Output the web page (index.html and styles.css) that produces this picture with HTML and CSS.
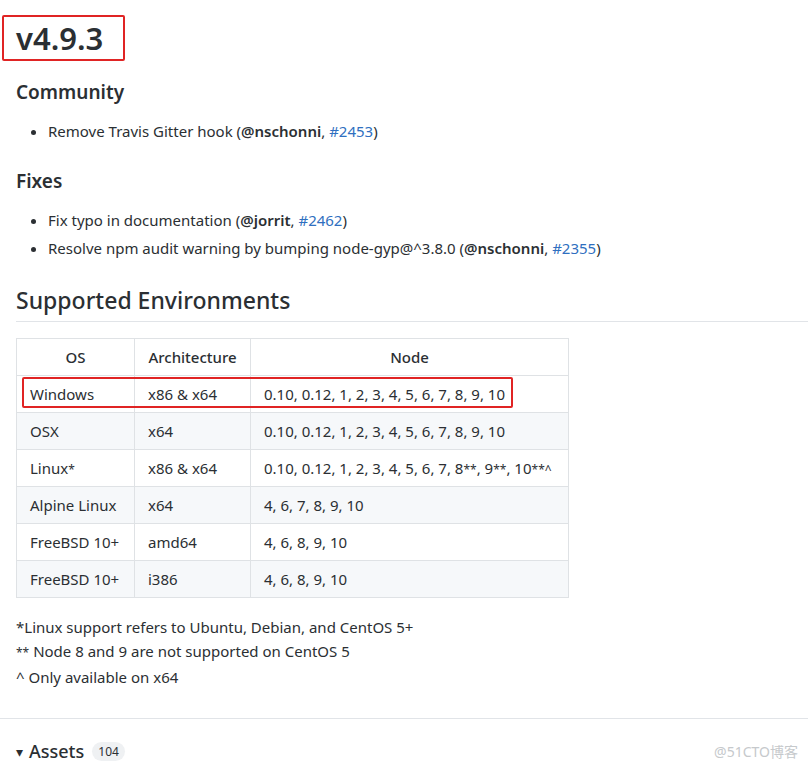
FILE: index.html
```html
<!DOCTYPE html>
<html lang="en">
<head>
  <meta charset="UTF-8" />
  <title>v4.9.3</title>
  <link rel="stylesheet" href="styles.css">
</head>
<body>

<div class="release">
  <h1 class="tag"><span class="mark">v4.9.3</span></h1>

  <h3>Community</h3>
  <ul>
    <li>Remove Travis Gitter hook (<b>@nschonni</b>, <a href="#">#2453</a>)</li>
  </ul>

  <h3>Fixes</h3>
  <ul>
    <li>Fix typo in documentation (<b>@jorrit</b>, <a href="#">#2462</a>)</li>
    <li>Resolve npm audit warning by bumping node-gyp@^3.8.0 (<b>@nschonni</b>, <a href="#">#2355</a>)</li>
  </ul>

  <h2>Supported Environments</h2>

  <table class="envs">
    <thead>
      <tr><th class="c-os">OS</th><th class="c-arch">Architecture</th><th>Node</th></tr>
    </thead>
    <tbody>
      <tr class="hl"><td>Windows</td><td>x86 &amp; x64</td><td>0.10, 0.12, 1, 2, 3, 4, 5, 6, 7, 8, 9, 10</td></tr>
      <tr><td>OSX</td><td>x64</td><td>0.10, 0.12, 1, 2, 3, 4, 5, 6, 7, 8, 9, 10</td></tr>
      <tr><td>Linux<span class="ast">*</span></td><td>x86 &amp; x64</td><td>0.10, 0.12, 1, 2, 3, 4, 5, 6, 7, 8<span class="ast">**</span>, 9<span class="ast">**</span>, 10<span class="ast">**^</span></td></tr>
      <tr><td>Alpine Linux</td><td>x64</td><td>4, 6, 7, 8, 9, 10</td></tr>
      <tr><td>FreeBSD 10+</td><td>amd64</td><td>4, 6, 8, 9, 10</td></tr>
      <tr><td>FreeBSD 10+</td><td>i386</td><td>4, 6, 8, 9, 10</td></tr>
    </tbody>
  </table>

  <p class="notes">
    *Linux support refers to Ubuntu, Debian, and CentOS 5+<br>
    <span class="ast">**</span> Node 8 and 9 are not supported on CentOS 5<br>
    ^ Only available on x64
  </p>
</div>

<div class="assets">
  <span class="caret">&#9662;</span>
  <span class="label">Assets</span>
  <span class="count">104</span>
  <span class="watermark">@51CTO博客</span>
</div>

</body>
</html>
```

FILE: styles.css
```css
html, body {
  margin: 0;
  padding: 0;
  background: #fff;
  color: #2b2f33;
  font-family: 'Noto Sans', 'Segoe UI', sans-serif;
  font-size: 15px;
  overflow: hidden;
}

a {
  color: #2f6fc0;
  text-decoration: none;
}

b {
  font-weight: 600;
}

.release {
  padding: 15px 0 0 16px;
}

.tag {
  margin: 0 0 17px -14px;
  font-size: 31px;
  font-weight: 600;
  line-height: 40px;
}

.tag .mark {
  display: inline-block;
  border: 2px solid #e02424;
  border-radius: 2px;
  padding: 1px 20px 1px 12px;
}

h3 {
  font-size: 19px;
  font-weight: 600;
  margin: 0 0 11px;
  line-height: 28px;
}

ul {
  margin: 0 0 22px;
  padding-left: 32px;
}

ul li {
  line-height: 28px;
}

h2 {
  font-size: 23px;
  font-weight: 500;
  margin: 23px 0 16px;
  padding-bottom: 6px;
  border-bottom: 1px solid #e1e4e8;
  line-height: 30px;
}

.envs {
  border-collapse: collapse;
  table-layout: fixed;
  width: 553px;
}

.envs th, .envs td {
  border: 1px solid #dfe2e5;
  height: 36px;
  padding: 0 13px;
  text-align: left;
  white-space: nowrap;
}

.envs th {
  text-align: center;
  font-weight: 500;
}

.envs .c-os {
  width: 91px;
}

.envs .c-arch {
  width: 89px;
}

.envs tbody tr:nth-child(even) {
  background: #f6f8fa;
}

.ast {
  font-size: 12px;
}

.envs tr.hl td {
  position: relative;
}

.envs tr.hl td:first-child::after {
  content: "";
  position: absolute;
  left: 5px;
  top: 1px;
  width: 487px;
  height: 27px;
  border: 2px solid #e02424;
  border-radius: 2px;
}

.notes {
  margin: 17px 0 0;
  line-height: 24px;
}

.assets {
  margin-top: 29px;
  border-top: 1px solid #e1e4e8;
  padding: 20px 16px 0;
  display: flex;
  align-items: center;
  gap: 6px;
}

.caret {
  font-size: 14px;
}

.label {
  font-size: 18px;
  font-weight: 500;
}

.count {
  background: #eff1f3;
  border-radius: 10px;
  font-size: 12px;
  padding: 1px 6px;
  margin-left: 2px;
}

.watermark {
  margin-left: auto;
  color: #c6c9cc;
  font-size: 14px;
  font-family: 'Noto Sans', 'Noto Sans CJK SC', sans-serif;
  margin-right: -6px;
}
```
